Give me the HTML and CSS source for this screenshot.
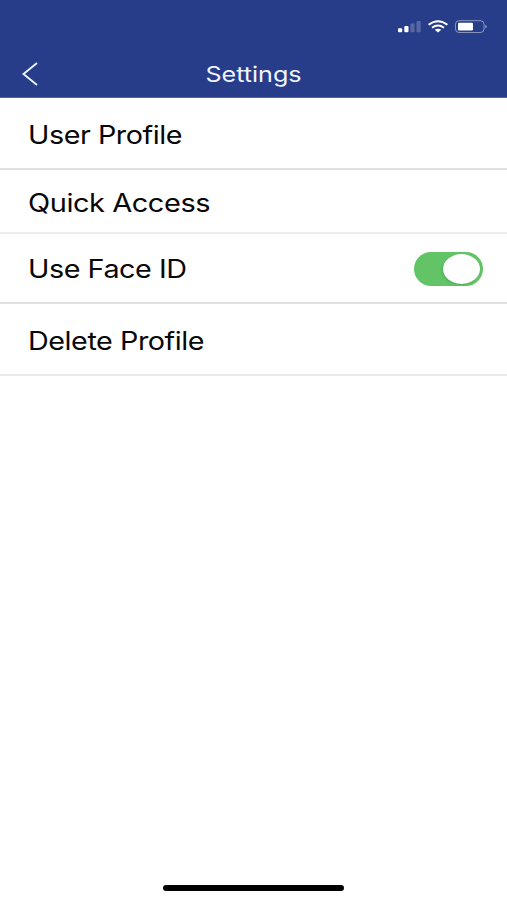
FILE: index.html
```html
<!DOCTYPE html>
<html lang="en">
<head>
<meta charset="utf-8">
<title>Settings</title>
<link rel="stylesheet" href="styles.css">
</head>
<body>
<div class="screen">
  <header class="header">
    <div class="status">
      <svg width="92" height="16" viewBox="0 0 92 16">
        <g fill="#fff">
          <rect x="1" y="9.2" width="4.2" height="4" rx="1"/>
          <rect x="7.3" y="7" width="4.2" height="6.2" rx="1"/>
          <rect x="13.4" y="4.5" width="4.2" height="8.7" rx="1" opacity=".22"/>
          <rect x="19.5" y="2" width="4.2" height="11.2" rx="1" opacity=".22"/>
        </g>
        <g fill="none" stroke="#fff" stroke-width="2">
          <path d="M31.6 5.8Q41 -1.4 50.4 5.8"/>
          <path d="M35 8.7Q41 4.5 47 8.7"/>
        </g>
        <path d="M37.7 10.8Q41 8.6 44.3 10.8L41 13.6Z" fill="#fff"/>
        <rect x="58.5" y="1.7" width="28.5" height="11.8" rx="3.5" fill="none" stroke="#fff" stroke-opacity=".45"/>
        <rect x="61" y="3.7" width="15" height="7.8" rx="1.3" fill="#fff"/>
        <path d="M88.3 5.8Q91.5 7.6 88.3 9.4Z" fill="#fff" opacity=".5"/>
      </svg>
    </div>
    <div class="nav">
      <svg class="back" width="20" height="28" viewBox="0 0 20 28"><path d="M17 3L3.5 14L17 25" fill="none" stroke="#edf2ff" stroke-width="1.9"/></svg>
      <h1 class="title">Settings</h1>
    </div>
  </header>
  <main class="list">
    <div class="row profile"><span class="label">User Profile</span></div>
    <div class="row quick"><span class="label">Quick Access</span></div>
    <div class="row face"><span class="label">Use Face ID</span><span class="toggle"><span class="knob"></span></span></div>
    <div class="row delete"><span class="label">Delete Profile</span></div>
  </main>
  <div class="home"></div>
</div>
</body>
</html>
```
FILE: styles.css
```css
* { box-sizing: border-box; }
body { margin: 0; background: #fff; font-family: Inter, "Liberation Sans", sans-serif; }
.screen { width: 507px; height: 900px; display: flex; flex-direction: column; overflow: hidden; }
.header { height: 98px; background: #283d89; color: #f2f5ff; border-bottom: 1px solid #5463a1; }
.status { display: flex; justify-content: flex-end; height: 50px; padding: 19px 18px 0 0; }
.nav { display: grid; grid-template-columns: 60px 1fr 60px; align-items: center; height: 48px; }
.back { margin-left: 20px; }
.title { margin: 0; padding-top: 1px; font-size: 21px; font-weight: 400; line-height: 28px; text-align: center; transform: scaleX(1.195); }
.row { display: flex; align-items: center; justify-content: space-between; padding: 0 24px 0 28px; border-bottom: 2px solid #e0e0e1; }
.label { padding-top: 3px; font-size: 25px; line-height: 32px; letter-spacing: -0.4px; color: #080808; white-space: nowrap; transform: scaleX(1.15); transform-origin: left; }
.profile { height: 72px; }
.quick { height: 64px; border-color: #ededee; }
.quick .label { transform: scaleX(1.16); }
.face { height: 70px; }
.face .label { padding-top: 2px; }
.delete { height: 72px; border-color: #eaeaeb; }
.toggle { display: flex; justify-content: flex-end; align-items: center; width: 69px; height: 34px; margin-top: 2px; padding-right: 3px; border-radius: 34px; background: #62c466; }
.knob { width: 37px; height: 30px; border-radius: 50%; background: #fff; box-shadow: -1px 1px 2px #3b944266; }
.home { width: 181px; height: 6px; margin: auto auto 9px 163px; border-radius: 3px; background: #000; }
```
